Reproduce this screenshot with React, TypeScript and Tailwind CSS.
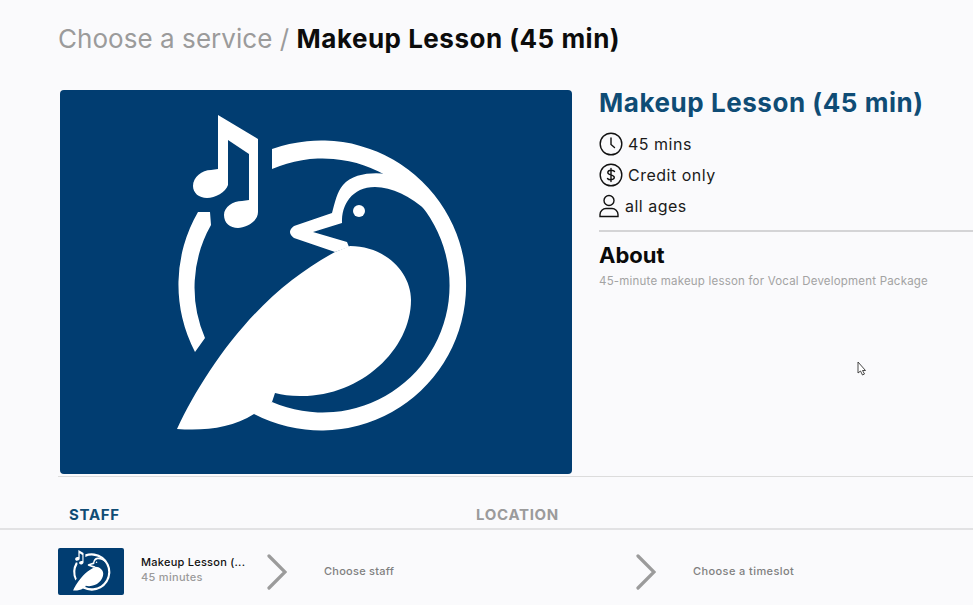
function BirdLogo({ className }: { className?: string }) {
    // viewBox uses the coordinates of the big picture on the page
    return (
        <svg viewBox="60 90 512 384" preserveAspectRatio="xMidYMid slice" className={className}>
            <rect x="60" y="90" width="512" height="384" fill="#013d71" />
            <g fill="#fff">
                {/* notes */}
                <path d="M218 115 L258 139 V212 C258 222 245 228 238 228 C230 228 224 223 224 215 C224 207 233 201 242 201 L249 200 V154 L228 140 V185 C226 192 215 198 207 198 C199 198 193 193 193 186 C193 177 202 170 211 170 L218 169 Z" />
                {/* ring */}
                <path d="M272 149 A145 145 0 1 1 254 414 L272 402 A127 127 0 1 0 272 169 Z" />
                <path d="M198 212 L210 212 L211 225 A127 127 0 0 0 205 338 L195 352 A145 145 0 0 1 198 212 Z" />
                {/* head outline */}
                <path d="M386 174 C372 172 352 174 343 185 C337 192 335 202 332 213 L294 226 Q286 232 294 238 L335 252 L349 247 L347 242 L313 232 L342 223 C341 205 352 187 375 187 C392 187 410 196 428 212 L425 195 Z" />
                <circle cx="359" cy="211" r="6" />
                {/* body */}
                <path d="M177 429 C200 380 240 320 292 280 C305 270 320 260 335 252 L350 246 C385 246 411 272 411 300 C411 350 360 397 300 396 C290 396 282 395 275 393 L272 402 L265 413 L254 414 C232 428 205 431 177 429 Z" />
            </g>
        </svg>
    )
}

function ClockIcon() {
    return (
        <svg width="24" height="24" viewBox="0 0 24 24" fill="none" stroke="#111" strokeWidth="1.4" strokeLinecap="round">
            <circle cx="12" cy="12" r="10.8" />
            <path d="M12 6 V12.5 L15.5 15.5" />
        </svg>
    )
}

function DollarIcon() {
    return (
        <svg width="24" height="24" viewBox="0 0 24 24" fill="none" stroke="#111" strokeWidth="1.4" strokeLinecap="round">
            <circle cx="12" cy="12" r="10.8" />
            <path d="M15.5 8.5 C14.5 7 9 6.5 8.8 9.5 C8.7 12.5 15.5 11.3 15.3 14.5 C15 17.5 9.5 17 8.5 15.5 M12 5.5 V18.5" />
        </svg>
    )
}

function PersonIcon() {
    return (
        <svg width="20" height="24" viewBox="0 0 20 24" fill="none" stroke="#111" strokeWidth="1.4">
            <circle cx="10" cy="6.5" r="5" />
            <path d="M1 22.5 V20.5 C1 17 4 14.5 7 14.5 H13 C16 14.5 19 17 19 20.5 V22.5 Z" />
        </svg>
    )
}

function Chevron() {
    return (
        <svg width="20" height="36" viewBox="0 0 20 36" fill="none" stroke="#9b9b9b" strokeWidth="3.2" strokeLinecap="round" strokeLinejoin="miter" className="shrink-0">
            <path d="M2 2 L18 18 L2 34" />
        </svg>
    )
}

export default function App() {
    return (
        <div className="h-[605px] w-[973px] overflow-hidden bg-[#fafafc] font-['Inter',sans-serif] relative flex flex-col">
            <div className="flex-1 min-h-0 overflow-hidden pl-[58px]">
                <h1 className="pt-[22px] text-[26px] leading-[34px] font-normal text-[#9b9b9b] tracking-[0.05px]">
                    Choose a service / <span className="font-bold text-[#0c0c0c] tracking-[0.5px]">Makeup Lesson (45 min)</span>
                </h1>

                <div className="mt-[34px] flex border-b border-[#dcdcdc] pb-[2px]">
                    <div className="ml-[2px] w-[512px] h-[384px] rounded-[4px] overflow-hidden shrink-0">
                        <BirdLogo className="w-full h-full" />
                    </div>
                    <div className="ml-[27px] flex-1 -mt-[2px]">
                        <h2 className="text-[26px] leading-[30px] font-bold text-[#0f4c75] tracking-[0.55px]">Makeup Lesson (45 min)</h2>
                        <div className="mt-[14px] flex flex-col gap-[7px] text-[16px] leading-[24px] text-[#1a1a1a] tracking-[0.5px]">
                            <div className="flex items-center gap-[5px]"><ClockIcon />45 mins</div>
                            <div className="flex items-center gap-[5px]"><DollarIcon />Credit only</div>
                            <div className="flex items-center gap-[6px]"><PersonIcon />all ages</div>
                        </div>
                        <div className="mt-[12px] border-t-2 border-[#d4d4d6] pt-[10px]">
                            <h3 className="text-[22px] leading-[26px] font-bold text-[#0a0a0a]">About</h3>
                            <p className="mt-[5px] text-[11.5px] leading-[16px] text-[#a3a3a3] tracking-[0.2px]">45-minute makeup lesson for Vocal Development Package</p>
                        </div>
                    </div>
                </div>

                <div className="mt-[29px] flex text-[15px] leading-[18px] font-bold tracking-[0.7px]">
                    <div className="ml-[11px] w-[407px] text-[#0f4c75]">STAFF</div>
                    <div className="text-[#9b9b9b]">LOCATION</div>
                </div>
            </div>

            <div className="h-[77px] shrink-0 border-t-2 border-[#e2e2e4] bg-[#fafafc] flex items-center pl-[58px] pt-[8px]">
                <BirdLogo className="w-[66px] h-[47px] rounded-[2px] shrink-0" />
                <div className="ml-[17px] mb-[4px] w-[126px] shrink-0">
                    <div className="text-[11px] leading-[15px] font-medium text-[#111] tracking-[0.25px]">Makeup Lesson (...</div>
                    <div className="text-[11px] leading-[15px] text-[#9b9b9b] font-medium tracking-[0.3px]">45 minutes</div>
                </div>
                <Chevron />
                <div className="ml-[37px] w-[312px] shrink-0 text-[11px] font-medium text-[#808080] tracking-[0.25px]">Choose staff</div>
                <Chevron />
                <div className="ml-[37px] text-[11px] font-medium text-[#808080] tracking-[0.4px]">Choose a timeslot</div>
            </div>

            <svg width="12" height="16" viewBox="0 0 12 16" className="absolute left-[857px] top-[361px]">
                <path d="M1 1 V12 L3.5 10 L5.5 14 L7.5 13 L5.5 9.5 H8.5 Z" fill="#fff" stroke="#333" strokeWidth="0.9" />
            </svg>
        </div>
    )
}
